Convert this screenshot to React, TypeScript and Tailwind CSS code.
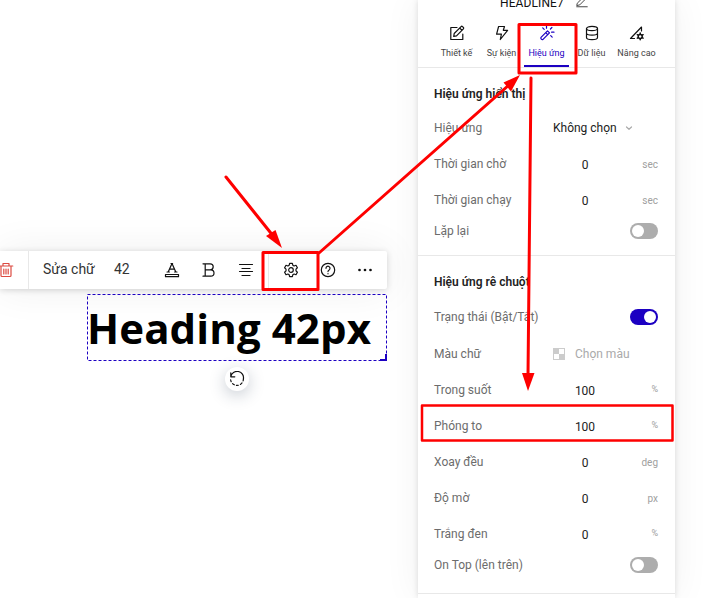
import type { ReactNode } from "react";

const roboto = "font-['Roboto','Liberation_Sans',sans-serif]";

function Svg({ children, className, box = "0 0 16 16" }: { children: ReactNode; className: string; box?: string }) {
  return (
    <svg viewBox={box} className={className} fill="none" stroke="currentColor" strokeWidth="1.2" strokeLinecap="round" strokeLinejoin="round">
      {children}
    </svg>
  );
}

function Tab({ label, icon, active }: { label: string; icon: ReactNode; active?: boolean }) {
  return (
    <div className={`flex h-[44px] w-[45px] flex-col items-center ${active ? "text-[#1c00c2]" : "text-[#111]"}`}>
      <div className="flex h-5 items-center justify-center">{icon}</div>
      <div className={`mt-[3px] h-[14px] text-[9px] leading-[14px] whitespace-nowrap ${active ? "" : "text-[#444]"}`}>{label}</div>
      {active && <div className="mt-[5px] h-[2px] w-[45px] bg-[#1c00c2]" />}
    </div>
  );
}

function Toggle({ on }: { on?: boolean }) {
  return (
    <div className={`flex h-4 w-7 items-center rounded-full p-[2px] ${on ? "justify-end bg-[#1c00c2]" : "bg-[#adadad]"}`}>
      <div className="h-3 w-3 rounded-full bg-white" />
    </div>
  );
}

function Row({ label, children, height = "h-9" }: { label: string; children: ReactNode; height?: string }) {
  return (
    <div className={`flex items-center ${height}`}>
      <div className="w-[119px] text-[12px] whitespace-nowrap text-[#6c6c6c]">{label}</div>
      <div className="flex flex-1 items-center">{children}</div>
    </div>
  );
}

function NumberRow({ label, value, unit }: { label: string; value: string; unit: string }) {
  return (
    <Row label={label}>
      <div className="w-[64px] pt-[2px] text-center text-[12px] text-[#222]">{value}</div>
      <div className={`flex-1 text-right text-[#a0a0a0] ${unit === "%" ? "text-[9px]" : "text-[10px]"}`}>{unit}</div>
    </Row>
  );
}

function ToggleRow({ label, on, height }: { label: string; on?: boolean; height?: string }) {
  return (
    <Row label={label} height={height}>
      <div className="ml-auto">
        <Toggle on={on} />
      </div>
    </Row>
  );
}

function Toolbar() {
  return (
    <div className="flex h-[38px] w-[387px] items-center rounded-r-[2px] bg-white text-[#111] shadow-[0_1px_6px_rgba(0,0,0,0.16),0_0_40px_rgba(0,0,0,0.07)]">
      <Svg className="-ml-[2px] h-4 w-4 shrink-0 text-[#dc4b42]">
        <path d="M1.2 4h13.6M5 3.8V1.5h6v2.3M3 4.3v9.2c0 .6.4 1 1 1h8c.6 0 1-.4 1-1V4.3M5.8 7v5M8 7v5M10.2 7v5" />
      </Svg>
      <div className="ml-[14px] h-full w-px bg-[#e8e8e8]" />
      <div className="ml-[14px] w-[71px] pb-[2px] text-[14px] whitespace-nowrap text-[#333]">Sửa chữ</div>
      <div className="w-[50px] pb-[2px] text-[14px] text-[#333]">42</div>
      <Svg className="h-4 w-4 shrink-0">
        <path d="M4.2 10 8 1.5 11.8 10M5.500 7.200h5M3 10h2.400M10.600 10H13M7 1.500h1.600" />
        <path d="M1.5 12.500h13v2.200h-13z" />
      </Svg>
      <Svg className="ml-[21px] h-4 w-4 shrink-0">
        <path d="M2 1.8h7.200a3 3 0 0 1 0 6H4.200M4.200 1.800v12.400M2 14.200h7.800a3.200 3.200 0 0 0 0-6.400" />
      </Svg>
      <Svg className="ml-[21px] h-4 w-4 shrink-0">
        <path d="M1.500 2.500h13M4 6.500h8M1.500 9.500h13M4 13.500h8" />
      </Svg>
      <div className="ml-[14px] h-full w-px bg-[#e8e8e8]" />
      <Svg className="ml-[14px] h-4 w-4 shrink-0">
        <path d="m6.6 1.3-.4 1.9-1.3.8-1.9-.7L1.600 5.800 3 7.100v1.800l-1.400 1.300L3 12.700l1.900-.7 1.300.8.4 1.900h2.800l.4-1.900 1.300-.8 1.900.7 1.400-2.500L13 8.900V7.100l1.400-1.300L13 3.300l-1.900.7-1.300-.8-.4-1.900Z" />
        <circle cx="8" cy="8" r="2.3" />
      </Svg>
      <Svg className="ml-[21px] h-4 w-4 shrink-0">
        <circle cx="8" cy="8" r="6.7" />
        <path d="M6 6.3a2 2 0 1 1 3.100 1.600C8.300 8.400 8 8.700 8 9.600M8 11.600v.2" />
      </Svg>
      <svg viewBox="0 0 16 16" className="ml-[21px] h-4 w-4 shrink-0" fill="currentColor">
        <circle cx="2.500" cy="8" r="1.350" />
        <circle cx="8" cy="8" r="1.350" />
        <circle cx="13.500" cy="8" r="1.350" />
      </svg>
    </div>
  );
}

function Canvas() {
  return (
    <main className="flex w-[418px] flex-col pt-[251px]">
      <Toolbar />
      <div className="relative mt-[5px] ml-[87px] h-[67px] w-[300px]">
        <svg className="absolute inset-0 h-full w-full" fill="none" stroke="#1c00c2">
          <rect x="0.5" y="0.5" width="299" height="66" strokeDasharray="3 2" />
          <path d="M299 60v6h-6" strokeWidth="2" />
        </svg>
        <h1 className="font-['Open_Sans','Noto_Sans',sans-serif] text-[42px] leading-[68px] font-bold tracking-[0.1px] whitespace-nowrap text-black">Heading 42px</h1>
      </div>
      <div className="mt-[6px] ml-[225px] flex h-6 w-6 items-center justify-center rounded-full bg-white text-[#111] shadow-[0_4px_16px_rgba(30,50,80,0.25)]">
        <Svg className="h-4 w-4">
          <path d="M1.8 1.8v4h4M1.800 5.600A6.400 6.400 0 0 1 14.400 8" />
          <path d="M14.400 8A6.400 6.400 0 1 1 1.600 8" strokeDasharray="2 2.2" />
        </Svg>
      </div>
    </main>
  );
}

function Panel() {
  return (
    <aside className="h-[598px] w-[257px] bg-white shadow-[0_0_6px_rgba(0,0,0,0.13),0_0_36px_rgba(0,0,0,0.06)]">
      <header className="h-[68px] border-b border-[#e8e8e8] px-4">
        <div className="flex h-[23px] items-start pl-[66px]">
          <div className="-mt-[5px] w-[76px] text-[12px] leading-4 tracking-[0.1px] whitespace-nowrap text-[#111]">HEADLINE7</div>
          <Svg className="-mt-[5px] h-[13px] w-[12px] text-[#333]">
            <path d="m2 10 8.800-8.800 2.700 2.700L5 12.500l-3.500.8ZM1 15h14" />
          </Svg>
        </div>
        <nav className="flex">
          <Tab
            label="Thiết kế"
            icon={
              <Svg className="h-4 w-4">
                <path d="M8 2.500H1.800v12h12V9" />
                <path d="m5.200 8.500 6.900-6.900a1 1 0 0 1 1.400 0l.9.9a1 1 0 0 1 0 1.400l-6.900 6.900-2.800.5ZM10.700 3l2.300 2.300" />
              </Svg>
            }
          />
          <Tab
            label="Sự kiện"
            icon={
              <Svg className="h-4 w-4">
                <path d="M4.600 1.500h5.900L9.300 5.300h4.300L6.300 14.500 7.400 9.200H2.600Z" />
              </Svg>
            }
          />
          <Tab
            active
            label="Hiệu ứng"
            icon={
              <Svg className="h-4 w-4">
                <path d="m2 12.400 6.500-6.500 2 2L4 14.400c-1.200.7-2.700-.8-2-2ZM6.700 7.700l2 2M7.500 1v2.200M3.700 2.800l1.500 1.500M11.400 4l1.500-1.500M12.600 7.200H15M11.700 10.700l1.500 1.500" />
              </Svg>
            }
          />
          <Tab
            label="Dữ liệu"
            icon={
              <Svg className="h-4 w-4">
                <ellipse cx="8" cy="3.500" rx="5.500" ry="2.200" />
                <path d="M2.500 3.500v9c0 1.200 2.500 2.200 5.500 2.200s5.500-1 5.500-2.200v-9M2.500 8c0 1.200 2.500 2.200 5.500 2.200s5.500-1 5.500-2.200" />
              </Svg>
            }
          />
          <Tab
            label="Nâng cao"
            icon={
              <Svg className="h-4 w-4">
                <path d="M12.500 6V2L1.500 13.500h4" />
                <circle cx="11.200" cy="11.400" r="2" strokeWidth="1.500" />
                <path d="M11.200 8v1M11.200 13.800v1M8.300 9.700l.9.500M13.200 12.600l.9.500M14.100 9.700l-.9.500M9.200 12.600l-.9.500" strokeWidth="1.500" />
              </Svg>
            }
          />
        </nav>
      </header>
      <section className="h-[188px] border-b border-[#e8e8e8] px-4 pt-[13px] pr-[17px]">
        <h2 className="mb-[3px] h-[26px] text-[12px] leading-[26px] font-semibold text-[#222]">Hiệu ứng hiển thị</h2>
        <Row label="Hiệu ứng">
          <div className="text-[12px] whitespace-nowrap text-[#222]">Không chọn</div>
          <Svg className="ml-2 h-2 w-2 text-[#aaa]" box="0 0 8 8">
            <path d="m1.500 3 2.500 2.300L6.500 3" />
          </Svg>
        </Row>
        <NumberRow label="Thời gian chờ" value="0" unit="sec" />
        <NumberRow label="Thời gian chạy" value="0" unit="sec" />
        <ToggleRow label="Lặp lại" height="h-[26px]" />
      </section>
      <section className="h-[338px] border-b border-[#e8e8e8] px-4 pt-[13px] pr-[17px]">
        <h2 className="mb-[3px] h-[26px] text-[12px] leading-[26px] font-semibold text-[#222]">Hiệu ứng rê chuột</h2>
        <ToggleRow label="Trạng thái (Bật/Tắt)" on height="h-[38px]" />
        <Row label="Màu chữ">
          <div className="grid h-3 w-3 grid-cols-2 border border-[#ccc]">
            <div className="bg-[#ccc]" />
            <div />
            <div />
            <div className="bg-[#ccc]" />
          </div>
          <div className="ml-[10px] text-[12px] text-[#aaa]">Chọn màu</div>
        </Row>
        <NumberRow label="Trong suốt" value="100" unit="%" />
        <NumberRow label="Phóng to" value="100" unit="%" />
        <NumberRow label="Xoay đều" value="0" unit="deg" />
        <NumberRow label="Độ mờ" value="0" unit="px" />
        <NumberRow label="Trắng đen" value="0" unit="%" />
        <ToggleRow label="On Top (lên trên)" height="h-[26px]" />
      </section>
    </aside>
  );
}

function Annotations() {
  return (
    <svg className="pointer-events-none absolute inset-0" width="714" height="598" fill="none" stroke="#fe0000" strokeWidth="3" strokeLinejoin="round" strokeLinecap="round">
      <rect x="263" y="252.500" width="55" height="37" />
      <rect x="519" y="24.500" width="57" height="48.500" />
      <rect x="422" y="405.500" width="250.500" height="35" strokeWidth="2.500" />
      <path d="M226 177 274 237M319 253 510 84M531 78 528 376" />
      <g fill="#fe0000" stroke="none">
        <path d="M282 248 266 236 275.500 230Z" />
        <path d="M520 75 503.500 82.500 511 91.500Z" />
        <path d="M528 391 522 373H534.500Z" />
      </g>
    </svg>
  );
}

export default function App() {
  return (
    <div className={`relative flex h-[598px] w-[714px] overflow-hidden bg-white ${roboto}`}>
      <Canvas />
      <Panel />
      <Annotations />
    </div>
  );
}
